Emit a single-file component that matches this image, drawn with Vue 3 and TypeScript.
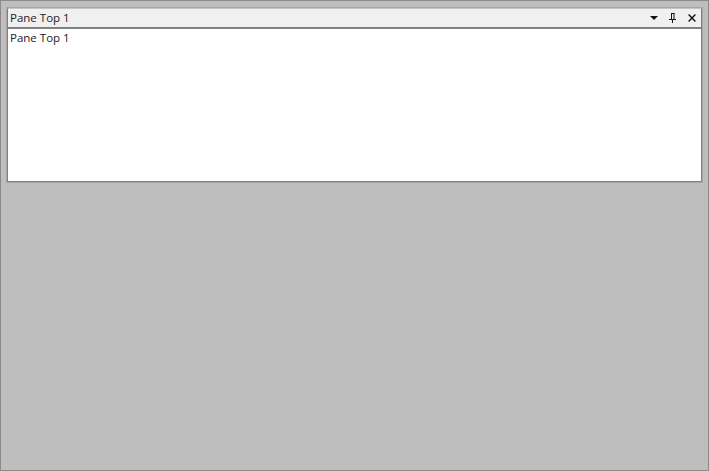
<script setup lang="ts">
const title: string = 'Pane Top 1'
</script>

<template>
  <div class="dock">
    <section class="pane">
      <div class="frame">
        <header class="head">
          <span class="title">{{ title }}</span>
          <div class="tools">
            <svg class="ico" width="8" height="4" viewBox="0 0 8 4"><path d="M0 0H8L4 4Z" fill="#111"/></svg>
            <svg class="ico" width="8" height="10" viewBox="0 0 8 10"><path d="M2 .5H5.5M2.5 .5V6M5 .5V6M0 6.5H7M3.5 7V10" fill="none" stroke="#111"/></svg>
            <svg class="ico" width="8" height="8" viewBox="0 0 8 8"><path d="M.6 .6L7.4 7.4M7.4 .6L.6 7.4" fill="none" stroke="#111" stroke-width="1.4"/></svg>
          </div>
        </header>
        <div class="body">{{ title }}</div>
      </div>
    </section>
  </div>
</template>

<style scoped>
.dock {
  box-sizing: border-box;
  width: 709px;
  height: 471px;
  padding: 6px 5px 0;
  border: 1px solid #8a8a8a;
  background: #bebebe;
  font: 11.5px "Open Sans", sans-serif;
  color: #1b1b1b;
}
.pane {
  box-sizing: border-box;
  height: 176px;
  border: 1px solid #a6a6a6;
}
.frame {
  box-sizing: border-box;
  height: 100%;
  display: flex;
  flex-direction: column;
  border: 1px solid #808080;
  border-top-color: #c4c4c4;
  background: #f0f0f0;
}
.head {
  height: 18px;
  flex: none;
  display: flex;
  align-items: center;
  justify-content: space-between;
  padding: 0 5px 0 2px;
}
.title { line-height: 18px; }
.tools {
  display: flex;
  align-items: center;
  gap: 11px;
}
.ico { display: block; }
.body {
  flex: 1;
  background: #fff;
  border-top: 2px solid #808080;
  padding: 1px 2px;
  line-height: 16px;
}
</style>
